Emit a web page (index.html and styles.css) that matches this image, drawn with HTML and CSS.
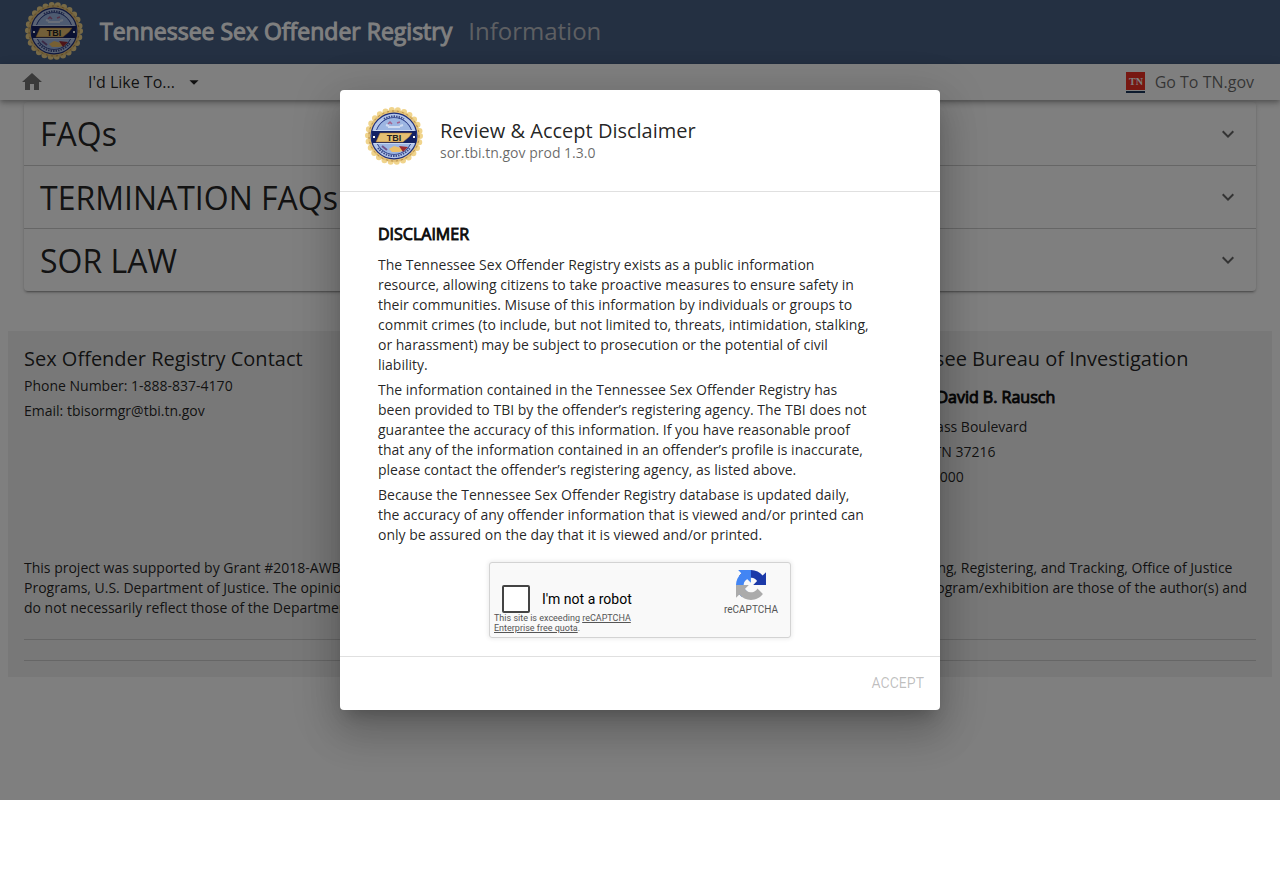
FILE: index.html
```html
<!DOCTYPE html>
<html lang="en">

<head>
    <meta charset="UTF-8">
    <meta name="viewport" content="width=device-width, initial-scale=1.0">
    <title>Tennessee Sex Offender Registry</title>
    <link rel="stylesheet" href="styles.css">
</head>

<body>

    <svg class="defs" aria-hidden="true">
        <symbol id="tbi-seal" viewBox="0 0 60 60">
            <circle cx="30" cy="30" r="26" fill="none" stroke="#f0d48c" stroke-width="6" stroke-linecap="round" stroke-dasharray="0 6.283" />
            <circle cx="30" cy="30" r="26" fill="#e4c27a" />
            <circle cx="30" cy="30" r="25" fill="none" stroke="#b98f45" stroke-width="1" stroke-dasharray="2 3" />
            <circle cx="30" cy="30" r="23.500" fill="#1b2c7c" />
            <circle cx="30" cy="30" r="20.500" fill="none" stroke="#b4c6ea" stroke-width="3.500" />
            <circle cx="30" cy="30" r="18" fill="#9db6e2" />
            <path d="M20 13a20 20 0 0 1 20 0" fill="none" stroke="#3b4c8c" stroke-width="2" stroke-dasharray="1.500 1" />
            <path d="M14 42a20 20 0 0 0 32 0" fill="none" stroke="#3b4c8c" stroke-width="2" stroke-dasharray="1.500 1" />
            <path d="M24 18l2-2 2 2M33 17l3-1" fill="none" stroke="#a5628c" stroke-width="1.500" />
            <path d="M24 21h12M22 19l3 1M36 20l3-1" stroke="#d0dcf2" stroke-width="2" />
            <path d="M8 25h44v12H8z" fill="#142163" />
            <path d="M10 24.500h40M10 37.500h40" stroke="#c8d6f0" stroke-width="1" />
            <path d="M12 36l4-9h32l-3 4-6 5z" fill="#e6bf72" stroke="#a8762c" stroke-width=".5" />
            <path d="M9 31h2M49 31h2" stroke="#fff" stroke-width="2" />
            <text x="30" y="35" class="seal-text">TBI</text>
            <path d="M25 43l5-3 7 2 5 2-7 2h-7z" fill="#edc069" />
            <path d="M35 40l9 1-5 5z" fill="#9d2a32" />
            <path d="M18 40l5 4" stroke="#74548c" stroke-width="2" />
        </symbol>
        <symbol id="chevron-down" viewBox="0 0 24 24">
            <path d="M7.410 8.590 12 13.170l4.590-4.580L18 10l-6 6-6-6z" fill="currentColor" />
        </symbol>
    </svg>

    <div class="app">
        <header class="app-bar">
            <svg class="app-bar__seal">
                <use href="#tbi-seal" />
            </svg>
            <h1 class="app-bar__title">Tennessee Sex Offender Registry</h1>
            <span class="app-bar__section">Information</span>
        </header>

        <nav class="nav-bar">
            <a class="nav-bar__home" href="#" aria-label="Home">
                <svg width="24" height="24" viewBox="0 0 24 24">
                    <path d="M10 20v-6h4v6h5v-8h3L12 3 2 12h3v8z" fill="currentColor" />
                </svg>
            </a>
            <button class="nav-bar__menu" type="button">
                I'd Like To...
                <svg width="22" height="22" viewBox="0 0 24 24">
                    <path d="M7 10l5 5 5-5z" fill="currentColor" />
                </svg>
            </button>
            <a class="nav-bar__link" href="#">
                <svg width="19" height="21" viewBox="0 0 19 21">
                    <path d="M0 0h19v18H0z" fill="#ee3025" />
                    <path d="M0 19h19v2H0z" fill="#1b365d" />
                    <text x="10" y="13" class="tn-text">TN</text>
                </svg>
                Go To TN.gov
            </a>
        </nav>

        <main class="content">
            <div class="panels">
                <button class="panel" type="button">FAQs
                    <svg width="24" height="24"><use href="#chevron-down" /></svg>
                </button>
                <button class="panel" type="button">TERMINATION FAQs
                    <svg width="24" height="24"><use href="#chevron-down" /></svg>
                </button>
                <button class="panel" type="button">SOR LAW
                    <svg width="24" height="24"><use href="#chevron-down" /></svg>
                </button>
            </div>
        </main>

        <footer class="footer">
            <div class="footer__columns">
                <section>
                    <h2 class="footer__title">Sex Offender Registry Contact</h2>
                    <p>Phone Number: 1-888-837-4170</p>
                    <p>Email: tbisormgr@tbi.tn.gov</p>
                </section>
                <section class="footer__bureau">
                    <h2 class="footer__title">Tennessee Bureau of Investigation</h2>
                    <h3 class="footer__director">Director: David B. Rausch</h3>
                    <p>901 R. S. Gass Boulevard</p>
                    <p>Nashville, TN 37216</p>
                    <p>(615) 744-4000</p>
                </section>
            </div>
            <p class="footer__grant">
                This project was supported by Grant #2018-AWBX-0008, awarded by the national Office of Sex Offender Sentencing, Monitoring, Apprehending, Registering, and Tracking, Office of Justice<br>
                Programs, U.S. Department of Justice. The opinions, findings, and conclusions or recommendations, publicly expressed in this publication/program/exhibition are those of the author(s) and<br>
                do not necessarily reflect those of the Department of Justice.
            </p>
            <hr>
            <hr>
        </footer>

        <div class="overlay">
            <div class="dialog" role="dialog" aria-modal="true" aria-labelledby="dialog-title">
                <div class="dialog__header">
                    <svg class="dialog__seal">
                        <use href="#tbi-seal" />
                    </svg>
                    <div class="dialog__titles">
                        <h2 class="dialog__title" id="dialog-title">Review &amp; Accept Disclaimer</h2>
                        <div class="dialog__subtitle">sor.tbi.tn.gov prod 1.3.0</div>
                    </div>
                </div>
                <div class="dialog__body">
                    <h3 class="dialog__heading">DISCLAIMER</h3>
                    <p>
                        The Tennessee Sex Offender Registry exists as a public information<br>
                        resource, allowing citizens to take proactive measures to ensure safety in<br>
                        their communities. Misuse of this information by individuals or groups to<br>
                        commit crimes (to include, but not limited to, threats, intimidation, stalking,<br>
                        or harassment) may be subject to prosecution or the potential of civil<br>
                        liability.
                    </p>
                    <p>
                        The information contained in the Tennessee Sex Offender Registry has<br>
                        been provided to TBI by the offender’s registering agency. The TBI does not<br>
                        guarantee the accuracy of this information. If you have reasonable proof<br>
                        that any of the information contained in an offender’s profile is inaccurate,<br>
                        please contact the offender’s registering agency, as listed above.
                    </p>
                    <p>
                        Because the Tennessee Sex Offender Registry database is updated daily,<br>
                        the accuracy of any offender information that is viewed and/or printed can<br>
                        only be assured on the day that it is viewed and/or printed.
                    </p>

                    <div class="captcha">
                        <div class="captcha__main">
                            <div class="captcha__row">
                                <input class="captcha__box" type="checkbox" id="robot">
                                <label for="robot">I'm not a robot</label>
                            </div>
                            <div class="captcha__notice">This site is exceeding <a href="#">reCAPTCHA<br>Enterprise free quota</a>.</div>
                        </div>
                        <div class="captcha__brand">
                            <svg width="30" height="30" viewBox="0 0 64 64">
                                <path d="M64 31.955l-.033-1.370V4.687l-7.160 7.160C50.948 4.674 42.033.093 32.050.093c-10.400 0-19.622 4.960-25.458 12.640l11.736 11.860a15.550 15.550 0 0 1 4.754-5.334c2.050-1.600 4.952-2.906 8.968-2.906.485 0 .860.057 1.135.163 4.976.393 9.288 3.140 11.828 7.124l-8.307 8.307L64 31.953" fill="#1c3aa9" />
                                <path d="M31.862.094l-1.370.033H4.594l7.160 7.160C4.580 13.147 0 22.060 0 32.046c0 10.400 4.960 19.622 12.640 25.458L24.500 45.768a15.550 15.550 0 0 1-5.334-4.754c-1.600-2.050-2.906-4.952-2.906-8.968 0-.485.057-.860.163-1.135.393-4.976 3.140-9.288 7.124-11.828l8.307 8.307L31.860.095" fill="#4285f4" />
                                <path d="M.001 32.045l.033 1.370v25.898l7.160-7.160c5.860 7.173 14.774 11.754 24.760 11.754 10.400 0 19.622-4.960 25.458-12.640l-11.736-11.860a15.550 15.550 0 0 1-4.754 5.334c-2.050 1.600-4.952 2.906-8.968 2.906-.485 0-.860-.057-1.135-.163-4.976-.393-9.288-3.140-11.828-7.124l8.307-8.307c-10.522.040-22.400.066-27.295-.005" fill="#ababab" />
                            </svg>
                            reCAPTCHA
                        </div>
                    </div>
                </div>
                <div class="dialog__actions">
                    <button class="dialog__accept" type="button" disabled>ACCEPT</button>
                </div>
            </div>
        </div>
    </div>

</body>

</html>
```
FILE: styles.css
```css
* {
    box-sizing: border-box;
}

body {
    margin: 0;
    font-family: "Open Sans", sans-serif;
    font-size: 14px;
    line-height: 20px;
    color: rgb(0 0 0 / 87%);
}

h1,
h2,
h3,
p {
    margin: 0;
    font-weight: 400;
}

button {
    border: 0;
    background: none;
    font-family: inherit;
    color: inherit;
}

a {
    color: inherit;
    text-decoration: none;
}

.defs {
    position: absolute;
    width: 0;
    height: 0;
}

.seal-text {
    font: bold 9px "Liberation Sans", sans-serif;
    text-anchor: middle;
    fill: #222;
}

.tn-text {
    font: bold 10px "Liberation Serif", serif;
    text-anchor: middle;
    fill: #fff;
}

.app {
    position: relative;
    min-height: 800px;
    background: #fff;
}

.app-bar {
    display: flex;
    align-items: center;
    height: 64px;
    padding: 0 24px 2px;
    background: #486084;
    color: #fff;
    font-size: 24px;
    line-height: 32px;
}

.app-bar__seal {
    width: 60px;
    height: 60px;
    margin-right: 16px;
}

.app-bar__title {
    margin-right: 16px;
    font-size: 23px;
    -webkit-text-stroke: 1px;
}

.app-bar__section {
    color: #bcbfc4;
}

.nav-bar {
    position: relative;
    display: flex;
    align-items: center;
    height: 36px;
    padding: 0 24px 0 20px;
    background: #fff;
    box-shadow: 0 2px 4px -1px rgb(0 0 0 / 20%), 0 4px 5px rgb(0 0 0 / 14%), 0 1px 10px rgb(0 0 0 / 12%);
    font-size: 16px;
}

.nav-bar svg {
    display: block;
}

.nav-bar__home {
    margin-right: 44px;
    color: rgb(0 0 0 / 54%);
}

.nav-bar__menu {
    display: flex;
    align-items: center;
    gap: 8px;
    padding: 0;
    font-size: 16px;
}

.nav-bar__link {
    display: flex;
    align-items: center;
    gap: 10px;
    margin-left: auto;
    padding-right: 2px;
    color: rgb(0 0 0 / 60%);
}

.content {
    padding: 2px 24px 40px;
}

.panels {
    border-radius: 4px;
    box-shadow: 0 3px 1px -2px rgb(0 0 0 / 20%), 0 2px 2px rgb(0 0 0 / 14%), 0 1px 5px rgb(0 0 0 / 12%);
}

.panel {
    display: flex;
    justify-content: space-between;
    align-items: center;
    width: 100%;
    height: 63px;
    padding: 0 16px;
    font-size: 32px;
}

.panel + .panel {
    border-top: 1px solid rgb(0 0 0 / 20%);
}

.panel svg {
    color: rgb(0 0 0 / 60%);
}

.footer {
    margin: 0 8px;
    padding: 16px;
    background: #f0f0f0;
}

.footer__columns {
    display: grid;
    grid-template-columns: 2fr 1fr;
    min-height: 211px;
}

.footer__columns p {
    margin-bottom: 5px;
}

.footer__bureau {
    padding-left: 22px;
    white-space: nowrap;
}

.footer__title {
    margin-bottom: 5px;
    font-size: 20px;
    line-height: 24px;
}

.footer__director {
    margin: 14px 0 8px;
    font-size: 16px;
    line-height: 24px;
    -webkit-text-stroke: 1px;
}

.footer__grant {
    margin-bottom: 21px;
    white-space: nowrap;
}

.footer hr {
    margin: 0 0 20px;
    border: 0;
    border-top: 1px solid rgb(0 0 0 / 15%);
}

.footer hr:last-child {
    margin: 0;
}

.overlay {
    position: absolute;
    inset: 0;
    display: flex;
    justify-content: center;
    align-items: center;
    background: rgb(0 0 0 / 50%);
}

.dialog {
    width: 100%;
    max-width: 600px;
    border-radius: 4px;
    background: #fff;
    box-shadow: 0 11px 15px -7px rgb(0 0 0 / 20%), 0 24px 38px 3px rgb(0 0 0 / 14%), 0 9px 46px 8px rgb(0 0 0 / 12%);
}

.dialog__header {
    display: flex;
    align-items: center;
    gap: 16px;
    padding: 16px 24px 25px;
    border-bottom: 1px solid rgb(0 0 0 / 12%);
}

.dialog__seal {
    width: 60px;
    height: 60px;
}

.dialog__titles {
    padding-top: 10px;
}

.dialog__title {
    font-size: 20px;
    line-height: 24px;
}

.dialog__subtitle {
    color: rgb(0 0 0 / 60%);
}

.dialog__body {
    padding: 30px 38px 18px;
}

.dialog__body p {
    margin-bottom: 5px;
}

.dialog__heading {
    margin-bottom: 9px;
    font-size: 16px;
    line-height: 24px;
    -webkit-text-stroke: 1px;
}

.captcha {
    display: flex;
    justify-content: space-between;
    width: 302px;
    height: 76px;
    margin: 17px auto 0;
    border: 1px solid #d3d3d3;
    border-radius: 3px;
    background: #f9f9f9;
    box-shadow: 0 0 4px 1px rgb(0 0 0 / 8%);
    font-family: Roboto, sans-serif;
    color: #000;
}

.captcha__main {
    padding: 22px 0 0 4px;
}

.captcha__row {
    display: flex;
    align-items: center;
    gap: 12px;
    padding-left: 8px;
}

.captcha__box {
    appearance: none;
    width: 28px;
    height: 28px;
    margin: 0;
    border: 2px solid #444;
    border-radius: 2px;
    background: #fff;
}

.captcha__notice {
    font-size: 9px;
    line-height: 10px;
    color: #555;
}

.captcha__notice a {
    text-decoration: underline;
}

.captcha__brand {
    display: flex;
    flex-direction: column;
    align-items: center;
    padding: 7px 12px 0 0;
    font-size: 10px;
    line-height: 20px;
    color: #555;
}

.dialog__actions {
    display: flex;
    justify-content: flex-end;
    padding: 8px 8px 9px;
    border-top: 1px solid rgb(0 0 0 / 12%);
}

.dialog__accept {
    padding: 0 8px;
    font-family: Roboto, sans-serif;
    font-size: 14px;
    line-height: 36px;
    color: rgb(0 0 0 / 26%);
}
```
